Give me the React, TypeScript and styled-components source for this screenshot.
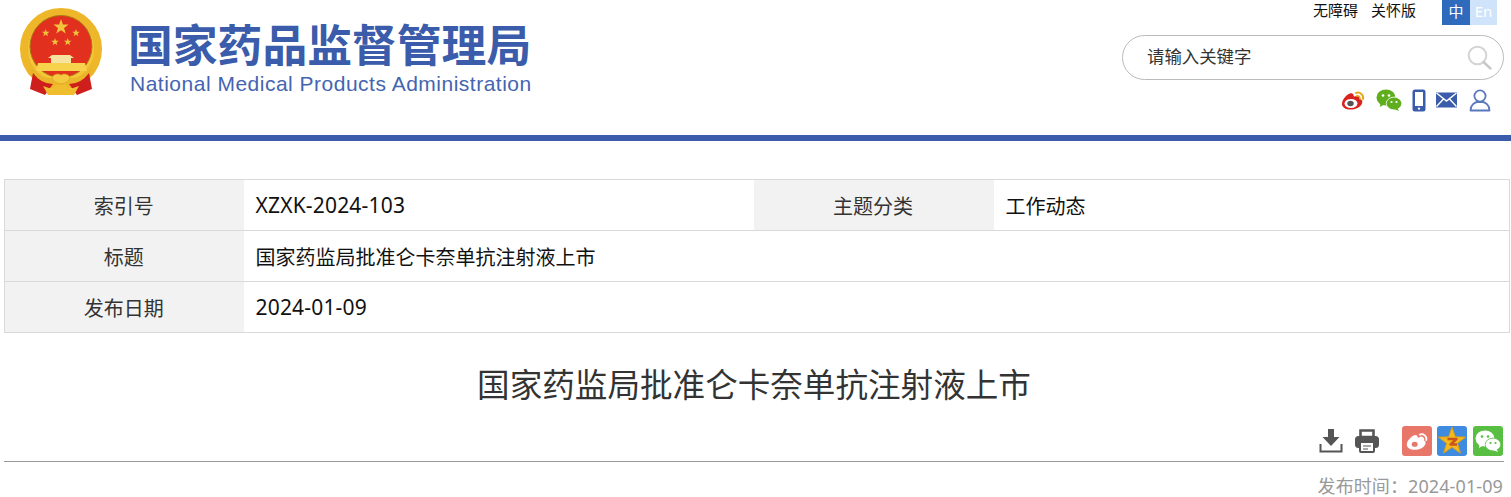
import React from "react";
import styled, { createGlobalStyle } from "styled-components";

const GlobalStyle = createGlobalStyle`
  html, body {
    margin: 0;
    padding: 0;
    background: #fff;
    overflow: hidden;
    font-family: "Noto Sans", "Noto Sans CJK SC", sans-serif;
  }
`;

const Page = styled.div`
  width: 1511px;
  height: 497px;
`;

const Header = styled.header`
  height: 135px;
  border-bottom: 6px solid #3a5cab;
  display: flex;
  justify-content: space-between;
`;

const Brand = styled.div`
  display: flex;
  align-items: flex-start;
  padding: 8px 0 0 19px;
  gap: 24px;
`;

const BrandText = styled.div`
  display: flex;
  flex-direction: column;
  color: #3a5cab;
`;

const BrandCn = styled.div`
  font-family: "Noto Sans CJK SC", sans-serif;
  font-weight: 700;
  font-size: 44.8px;
  line-height: 52px;
  margin-top: 9px;
  white-space: nowrap;
`;

const BrandEn = styled.div`
  font-family: "Liberation Sans", sans-serif;
  font-size: 21px;
  line-height: 24px;
  margin: 3px 0 0 2px;
  letter-spacing: 0.5px;
  white-space: nowrap;
  color: #4465b0;
`;

const Tools = styled.div`
  width: 389px;
  margin-right: 7px;
  display: flex;
  flex-direction: column;
  align-items: flex-end;
`;

const TopRow = styled.div`
  display: flex;
  align-items: flex-start;
  height: 35px;
  margin-right: 7px;
`;

const TopLink = styled.a`
  font-family: "Noto Sans CJK SC", sans-serif;
  font-size: 15px;
  line-height: 20px;
  color: #111;
  margin-right: 13px;
`;

const Lang = styled.span<{ $active?: boolean }>`
  width: ${(p) => (p.$active ? 28 : 27)}px;
  height: 25px;
  margin-left: ${(p) => (p.$active ? 13 : 0)}px;
  background: ${(p) => (p.$active ? "#2f6bbd" : "#cfe4fb")};
  color: #fff;
  font-size: 15px;
  line-height: 23px;
  text-align: center;
`;

const Search = styled.div`
  box-sizing: border-box;
  width: 382px;
  height: 45px;
  border: 1px solid #bbb;
  border-radius: 23px;
  display: flex;
  align-items: center;
  justify-content: space-between;
  padding: 0 11px 0 25px;
  font-family: "Noto Sans CJK SC", sans-serif;
  font-size: 17.4px;
  color: #333;
`;

const SearchLabel = styled.span`
  margin: -4px 0 0 -1px;
`;

const SocialRow = styled.div`
  display: flex;
  align-items: center;
  height: 24px;
  margin-top: 8px;
  margin-right: 13px;
  gap: 10px;
`;

const Main = styled.main`
  padding: 38px 1px 0 4px;
`;

const InfoTable = styled.table`
  width: 1506px;
  border-collapse: collapse;
  table-layout: fixed;
  border: 1px solid #d9d9d9;
`;

const Row = styled.tr`
  height: 51px;
  border-bottom: 1px solid #d9d9d9;
`;

const Label = styled.td`
  background: #f2f2f2;
  color: #333;
  font-family: "Noto Sans CJK SC", sans-serif;
  font-size: 20px;
  text-align: center;
  padding: 0 1px 0 0;
`;

const Value = styled.td<{ $latin?: boolean }>`
  color: #111;
  font-size: ${(p) => (p.$latin ? 21 : 20)}px;
  letter-spacing: ${(p) => (p.$latin ? 0.18 : 0)}px;
  padding: 0 0 0 12px;
  font-family: "Noto Sans", "Noto Sans CJK SC", sans-serif;
`;

const Title = styled.h1`
  margin: 26px 6px 0 0;
  font-family: "Noto Sans CJK SC", sans-serif;
  font-weight: 400;
  font-size: 32.6px;
  line-height: 48px;
  color: #333;
  text-align: center;
`;

const ActionRow = styled.div`
  height: 55px;
  border-bottom: 1px solid #999;
  display: flex;
  justify-content: flex-end;
  align-items: flex-start;
  padding: 19px 1px 0 0;
  box-sizing: border-box;
  width: 1500px;
`;

const ActionIcon = styled.svg`
  display: block;
  margin: 3px 0 0 12px;
`;

const ShareGroup = styled.div`
  display: flex;
  gap: 5px;
  margin-left: 23px;
`;

const ShareTile = styled.div<{ $bg: string }>`
  width: 30px;
  height: 30px;
  border-radius: 3px;
  background: ${(p) => p.$bg};
  display: flex;
  align-items: center;
  justify-content: center;

  &:last-child {
    margin-left: 1px;
  }
`;

const PublishTime = styled.div`
  width: 1499px;
  text-align: right;
  font-size: 18px;
  letter-spacing: 0.1px;
  line-height: 24px;
  margin-top: 12px;
  color: #999;
`;

function starPoints(cx: number, cy: number, r: number) {
  const pts: string[] = [];
  for (let i = 0; i < 10; i++) {
    const rad = i % 2 === 0 ? r : r * 0.4;
    const a = (Math.PI / 5) * i - Math.PI / 2;
    pts.push(`${(cx + rad * Math.cos(a)).toFixed(2)},${(cy + rad * Math.sin(a)).toFixed(2)}`);
  }
  return pts.join(" ");
}

const Emblem = () => (
  <svg width="85" height="90" viewBox="0 0 85 90">
    <circle cx="42" cy="41" r="37" fill="#f4c63a" stroke="#eeb72a" strokeWidth="8" />
    <circle cx="42" cy="38.5" r="31" fill="#e2301f" stroke="#a97c12" strokeWidth="1" />
    <polygon points={starPoints(42, 19, 8)} fill="#f3c33c" />
    <polygon points={starPoints(26.7, 25, 4)} fill="#f3c33c" />
    <polygon points={starPoints(57, 25, 4)} fill="#f3c33c" />
    <polygon points={starPoints(36, 34, 4)} fill="#f3c33c" />
    <polygon points={starPoints(48.7, 34, 4)} fill="#f3c33c" />
    <path d="M29 50 L33 47 L51 47 L55 50 L52 50 L52 55 L32 55 L32 50 Z" fill="#f6e3a0" />
    <path d="M19 55 L66 55 L68 63 L17 63 Z" fill="#f7d24c" />
    <path d="M12 60 Q24 71 33 70 L37 75 Q24 77 9 66 Z" fill="#eab52a" />
    <path d="M72 60 Q60 71 51 70 L47 75 Q60 77 75 66 Z" fill="#eab52a" />
    <path d="M14 65 L11 81 L26 87 L34 76 Q22 76 14 65 Z" fill="#cf1f1c" />
    <path d="M70 65 L73 81 L58 87 L50 76 Q62 76 70 65 Z" fill="#cf1f1c" />
    <path d="M33 69 Q37 64 42 67 Q47 64 51 69 Q50 75 42 76 Q34 75 33 69 Z" fill="#f5c93f" stroke="#d99b1a" strokeWidth="0.6" />
    <path d="M24 78 L33 81 Q37 76 42 77 Q47 76 51 81 L60 78 L55 87 L29 87 Z" fill="#f0bd2e" />
  </svg>
);

const WeiboGlyph = ({ size, body, eye, arc }: { size: number; body: string; eye: string; arc: string }) => (
  <svg width={size} height={size} viewBox="0 0 26 24">
    <path d="M3 12 C6 7 11 4 13 6 C14 7 13.5 8.5 14 8.6 C17 7.5 20 8 19.5 10.8 C22 11.5 23 13 22 15.5 C20 20 14 22 9 21.5 C4 21 0 18 3 12 Z" fill={body} />
    <ellipse cx="11" cy="15.5" rx="6.5" ry="4.6" fill="#fff" />
    <ellipse cx="10.5" cy="15.5" rx="3.2" ry="2.8" fill={eye} />
    <path d="M16 5 C20 3.5 24 7 23 11" fill="none" stroke={arc} strokeWidth="2" strokeLinecap="round" />
    <path d="M16.5 8 C18.5 7.4 20.5 9 20 11" fill="none" stroke={arc} strokeWidth="1.5" strokeLinecap="round" />
  </svg>
);

const WechatGlyph = ({ size, big, small, dot }: { size: number; big: string; small: string; dot: string }) => (
  <svg width={size} height={size} viewBox="0 0 26 24">
    <ellipse cx="10" cy="9.5" rx="9.5" ry="8" fill={big} />
    <path d="M4.5 14 L4 19 L9 16 Z" fill={big} />
    <ellipse cx="18" cy="15.5" rx="7.8" ry="6.4" stroke={dot} strokeWidth="0.8" fill={small} />
    <path d="M21.5 20 L23 23 L18 21 Z" fill={small} />
    <circle cx="7" cy="7.5" r="1.3" fill={dot} />
    <circle cx="13" cy="7.5" r="1.3" fill={dot} />
    <circle cx="15.5" cy="14" r="1.1" fill={dot} />
    <circle cx="20.5" cy="14" r="1.1" fill={dot} />
  </svg>
);

const PhoneIcon = () => (
  <svg width="14" height="23" viewBox="0 0 14 23">
    <rect x="0.5" y="0.5" width="13" height="22" rx="2.5" fill="#3a5cab" />
    <rect x="3" y="3" width="8" height="14" fill="#fff" />
    <circle cx="7" cy="19.6" r="1.2" fill="#fff" />
  </svg>
);

const MailIcon = () => (
  <svg width="21" height="16" viewBox="0 0 21 16">
    <rect width="21" height="15" y="0.5" fill="#3a5cab" />
    <path d="M0.5 1 L10.5 9 L20.5 1 M0.5 14.5 L7.5 7 M20.5 14.5 L13.5 7" fill="none" stroke="#fff" strokeWidth="1.4" />
  </svg>
);

const UserIcon = () => (
  <svg width="22" height="23" viewBox="0 0 22 23" style={{ marginLeft: 2 }}>
    <circle cx="11" cy="7" r="5.6" fill="none" stroke="#5b78bd" strokeWidth="1.8" />
    <path d="M1.5 21.5 C1.5 16 5.5 13.5 8 13 L14 13 C16.5 13.5 20.5 16 20.5 21.5 Z" fill="none" stroke="#5b78bd" strokeWidth="1.8" strokeLinejoin="round" />
  </svg>
);

const SearchIcon = () => (
  <svg width="25" height="25" viewBox="0 0 25 25">
    <circle cx="10.5" cy="10.5" r="8.8" fill="none" stroke="#d4d4d4" strokeWidth="2" />
    <path d="M16.5 17 L23.5 23.5" stroke="#c8c8c8" strokeWidth="2.4" strokeLinecap="round" />
  </svg>
);

const DownloadIcon = () => (
  <ActionIcon width="24" height="24" viewBox="0 0 24 24">
    <path d="M9 0 H15 V8 H20.5 L12 17 L3.5 8 H9 Z" fill="#555" />
    <path d="M1.5 15 V22.5 H22.5 V15" fill="none" stroke="#555" strokeWidth="2" />
  </ActionIcon>
);

const PrintIcon = () => (
  <ActionIcon width="24" height="24" viewBox="0 0 24 24">
    <path d="M5.5 1.5 H18.5 V8 H5.5 Z" fill="none" stroke="#555" strokeWidth="2.6" />
    <rect y="7" width="24" height="12" rx="3.5" fill="#555" />
    <rect x="5" y="13" width="14" height="10" rx="1" fill="#fff" stroke="#555" strokeWidth="2" />
    <path d="M8 17 H16 M8 20 H13" stroke="#555" strokeWidth="1.2" />
  </ActionIcon>
);

const QzoneIcon = () => (
  <svg width="28" height="28" viewBox="0 0 28 28">
    <polygon points={starPoints(14, 14.5, 14.5)} fill="#f5b81e" stroke="#d89a10" strokeWidth="0.8" />
    <path d="M9.5 12 H18.5 L12.5 17.5 H19" fill="none" stroke="#c8571a" strokeWidth="2.4" strokeLinejoin="round" />
  </svg>
);

export default function App() {
  return (
    <Page>
      <GlobalStyle />
      <Header>
        <Brand>
          <Emblem />
          <BrandText>
            <BrandCn>国家药品监督管理局</BrandCn>
            <BrandEn>National Medical Products Administration</BrandEn>
          </BrandText>
        </Brand>
        <Tools>
          <TopRow>
            <TopLink>无障碍</TopLink>
            <TopLink>关怀版</TopLink>
            <Lang $active>中</Lang>
            <Lang>En</Lang>
          </TopRow>
          <Search>
            <SearchLabel>请输入关键字</SearchLabel>
            <SearchIcon />
          </Search>
          <SocialRow>
            <WeiboGlyph size={26} body="#d9231f" eye="#555" arc="#e8a91f" />
            <WechatGlyph size={26} big="#5fae1e" small="#5fae1e" dot="#fff" />
            <PhoneIcon />
            <MailIcon />
            <UserIcon />
          </SocialRow>
        </Tools>
      </Header>
      <Main>
        <InfoTable>
          <colgroup>
            <col style={{ width: 239 }} />
            <col style={{ width: 510 }} />
            <col style={{ width: 240 }} />
            <col />
          </colgroup>
          <tbody>
            <Row>
              <Label>索引号</Label>
              <Value $latin>XZXK-2024-103</Value>
              <Label>主题分类</Label>
              <Value>工作动态</Value>
            </Row>
            <Row>
              <Label>标题</Label>
              <Value colSpan={3}>国家药监局批准仑卡奈单抗注射液上市</Value>
            </Row>
            <Row>
              <Label>发布日期</Label>
              <Value $latin colSpan={3}>2024-01-09</Value>
            </Row>
          </tbody>
        </InfoTable>
        <Title>国家药监局批准仑卡奈单抗注射液上市</Title>
        <ActionRow>
          <DownloadIcon />
          <PrintIcon />
          <ShareGroup>
            <ShareTile $bg="#e8776a">
              <WeiboGlyph size={24} body="#fff" eye="#e8776a" arc="#fff" />
            </ShareTile>
            <ShareTile $bg="#3f8be0">
              <QzoneIcon />
            </ShareTile>
            <ShareTile $bg="#58bf42">
              <WechatGlyph size={26} big="#fff" small="#fff" dot="#58bf42" />
            </ShareTile>
          </ShareGroup>
        </ActionRow>
        <PublishTime>发布时间：2024-01-09</PublishTime>
      </Main>
    </Page>
  );
}
